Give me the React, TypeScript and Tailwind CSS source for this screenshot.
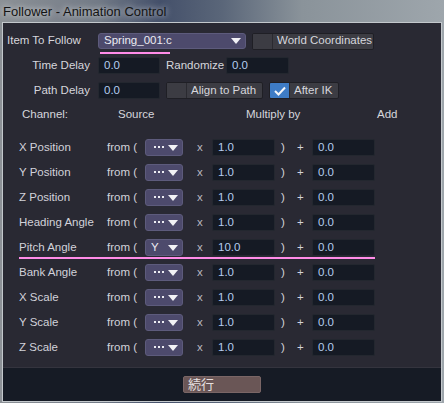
import React from 'react';

const font = { fontFamily: '"Liberation Sans", "Noto Sans CJK JP", sans-serif' };

// little white triangle used on the popup menus
function Arrow() {
  return (
    <svg width="10" height="6" viewBox="0 0 10 6" className="shrink-0">
      <path d="M0 0 H10 L5 6 Z" fill="#f2f2f6" />
    </svg>
  );
}

function Dots() {
  return (
    <svg width="10" height="3" viewBox="0 0 10 3" className="shrink-0">
      <rect x="0" y="0" width="2" height="2" fill="#eeeef4" />
      <rect x="4" y="0" width="2" height="2" fill="#eeeef4" />
      <rect x="8" y="0" width="2" height="2" fill="#eeeef4" />
    </svg>
  );
}

function Field({ value, w = 'w-[63px]' }: { value: string; w?: string }) {
  return (
    <div className={`${w} h-[17px] shrink-0 bg-[#151a24] border border-[#23272f] rounded-[2px] flex items-center pl-[5px] text-[#b4cdef]`}>
      {value}
    </div>
  );
}

function Toggle({ label, checked, w }: { label: string; checked?: boolean; w: string }) {
  return (
    <div className={`${w} h-[17px] shrink-0 flex border border-[#1f1f25] rounded-[2px] bg-[#3c3c43] overflow-hidden`}>
      <div className={`w-[20px] h-full shrink-0 flex items-center justify-center border-r border-[#2a2a30] ${checked ? 'bg-[#3e7cc6]' : 'bg-[#3c3c43]'}`}>
        {checked && (
          <svg width="12" height="10" viewBox="0 0 12 10">
            <path d="M1 5 L4.5 8.5 L11 1.5" stroke="#f4f6fa" strokeWidth="2" fill="none" />
          </svg>
        )}
      </div>
      <div className="flex-1 flex items-center pl-[4px] whitespace-nowrap text-[#d6d6dc]">{label}</div>
    </div>
  );
}

const channels = [
  'X Position',
  'Y Position',
  'Z Position',
  'Heading Angle',
  'Pitch Angle',
  'Bank Angle',
  'X Scale',
  'Y Scale',
  'Z Scale',
];

function ChannelRow({ name }: { name: string }) {
  const pitch = name === 'Pitch Angle';
  return (
    <div className="relative flex items-center h-[17px] text-[#d2d2da] whitespace-nowrap">
      <span className="w-[104px] pl-[16px] shrink-0">{name}</span>
      <span className="w-[38px] shrink-0">from (</span>
      <div className="w-[38px] h-[17px] shrink-0 bg-[#4d4a6c] border border-[#5d5b7c] rounded-[3px] flex items-center justify-end gap-[4px] pr-[4px]">
        {pitch ? <span className="mr-auto pl-[5px] text-[#ececf2]">Y</span> : <Dots />}
        <Arrow />
      </div>
      <span className="w-[29px] pl-[14px] shrink-0 text-[#b8b8c0]">x</span>
      <Field value={pitch ? '10.0' : '1.0'} />
      <span className="w-[16px] pl-[6px] shrink-0">)</span>
      <span className="w-[21px] pl-[6px] shrink-0">+</span>
      <Field value="0.0" />
      {pitch && <span className="absolute left-[16px] top-[18px] w-[356px] h-[2px] bg-[#ff8ce8]" />}
    </div>
  );
}

export default function App() {
  return (
    <div
      className="w-[444px] h-[403px] overflow-hidden flex flex-col text-[11.5px] leading-none bg-[linear-gradient(90deg,#8c9196_0%,#737b87_22%,#44506a_36%,#5a6679_50%,#8a939a_68%,#9ea6ac_100%)]"
      style={font}
    >
      {/* glass title bar */}
      <div className="h-[22px] shrink-0 flex items-center pl-[3px] pt-[1px] text-[13px] text-[#141414] whitespace-nowrap [text-shadow:0_0_6px_rgba(255,255,255,0.9)]">
        Follower - Animation Control
      </div>

      <div className="mx-[2px] w-[440px] h-[380px] shrink-0 flex flex-col border border-[#c3c8cc] bg-[#292933]">
        <div className="flex-1 flex flex-col">
          {/* Item To Follow */}
          <div className="flex items-center h-[16px] mt-[10px] text-[#d6d6dc] whitespace-nowrap">
            <span className="w-[95px] pl-[4px] shrink-0">Item To Follow</span>
            <div className="relative w-[148px] h-[16px] shrink-0 bg-[#4d4a6c] border border-[#5d5b7c] rounded-[3px] flex items-center pl-[5px] pr-[4px]">
              <span className="text-[#ececf2]">Spring_001:c</span>
              <span className="ml-auto"><Arrow /></span>
              <span className="absolute left-[1px] top-[18px] w-[70px] h-[2px] bg-[#ff8ce8]" />
            </div>
            <div className="ml-[6px]">
              <Toggle label="World Coordinates" w="w-[122px]" />
            </div>
          </div>

          {/* Time Delay */}
          <div className="flex items-center h-[17px] mt-[8px] text-[#d6d6dc] whitespace-nowrap">
            <span className="w-[95px] pr-[8px] text-right shrink-0">Time Delay</span>
            <Field value="0.0" w="w-[62px]" />
            <span className="w-[66px] pl-[6px] shrink-0">Randomize</span>
            <Field value="0.0" />
          </div>

          {/* Path Delay */}
          <div className="flex items-center h-[17px] mt-[8px] text-[#d6d6dc] whitespace-nowrap">
            <span className="w-[95px] pr-[8px] text-right shrink-0">Path Delay</span>
            <Field value="0.0" w="w-[62px]" />
            <div className="ml-[6px]">
              <Toggle label="Align to Path" w="w-[97px]" />
            </div>
            <div className="ml-[6px]">
              <Toggle label="After IK" checked w="w-[70px]" />
            </div>
          </div>

          {/* column headings */}
          <div className="flex items-center h-[14px] mt-[9px] text-[#d6d6dc] whitespace-nowrap">
            <span className="w-[115px] pl-[19px] shrink-0">Channel:</span>
            <span className="w-[128px] shrink-0">Source</span>
            <span className="w-[131px] shrink-0">Multiply by</span>
            <span>Add</span>
          </div>

          <div className="flex flex-col gap-[8px] mt-[17px]">
            {channels.map((c) => (
              <ChannelRow key={c} name={c} />
            ))}
          </div>
        </div>

        {/* footer */}
        <div className="h-[34px] shrink-0 border-t border-[#34343e] bg-[#161b25] flex justify-center pt-[8px]">
          <div className="w-[78px] h-[17px] bg-[#6a5656] border border-[#7a6666] rounded-[2px] flex items-center pl-[4px] text-[#e6e0e0] text-[13px]">
            続行
          </div>
        </div>
      </div>
    </div>
  );
}
